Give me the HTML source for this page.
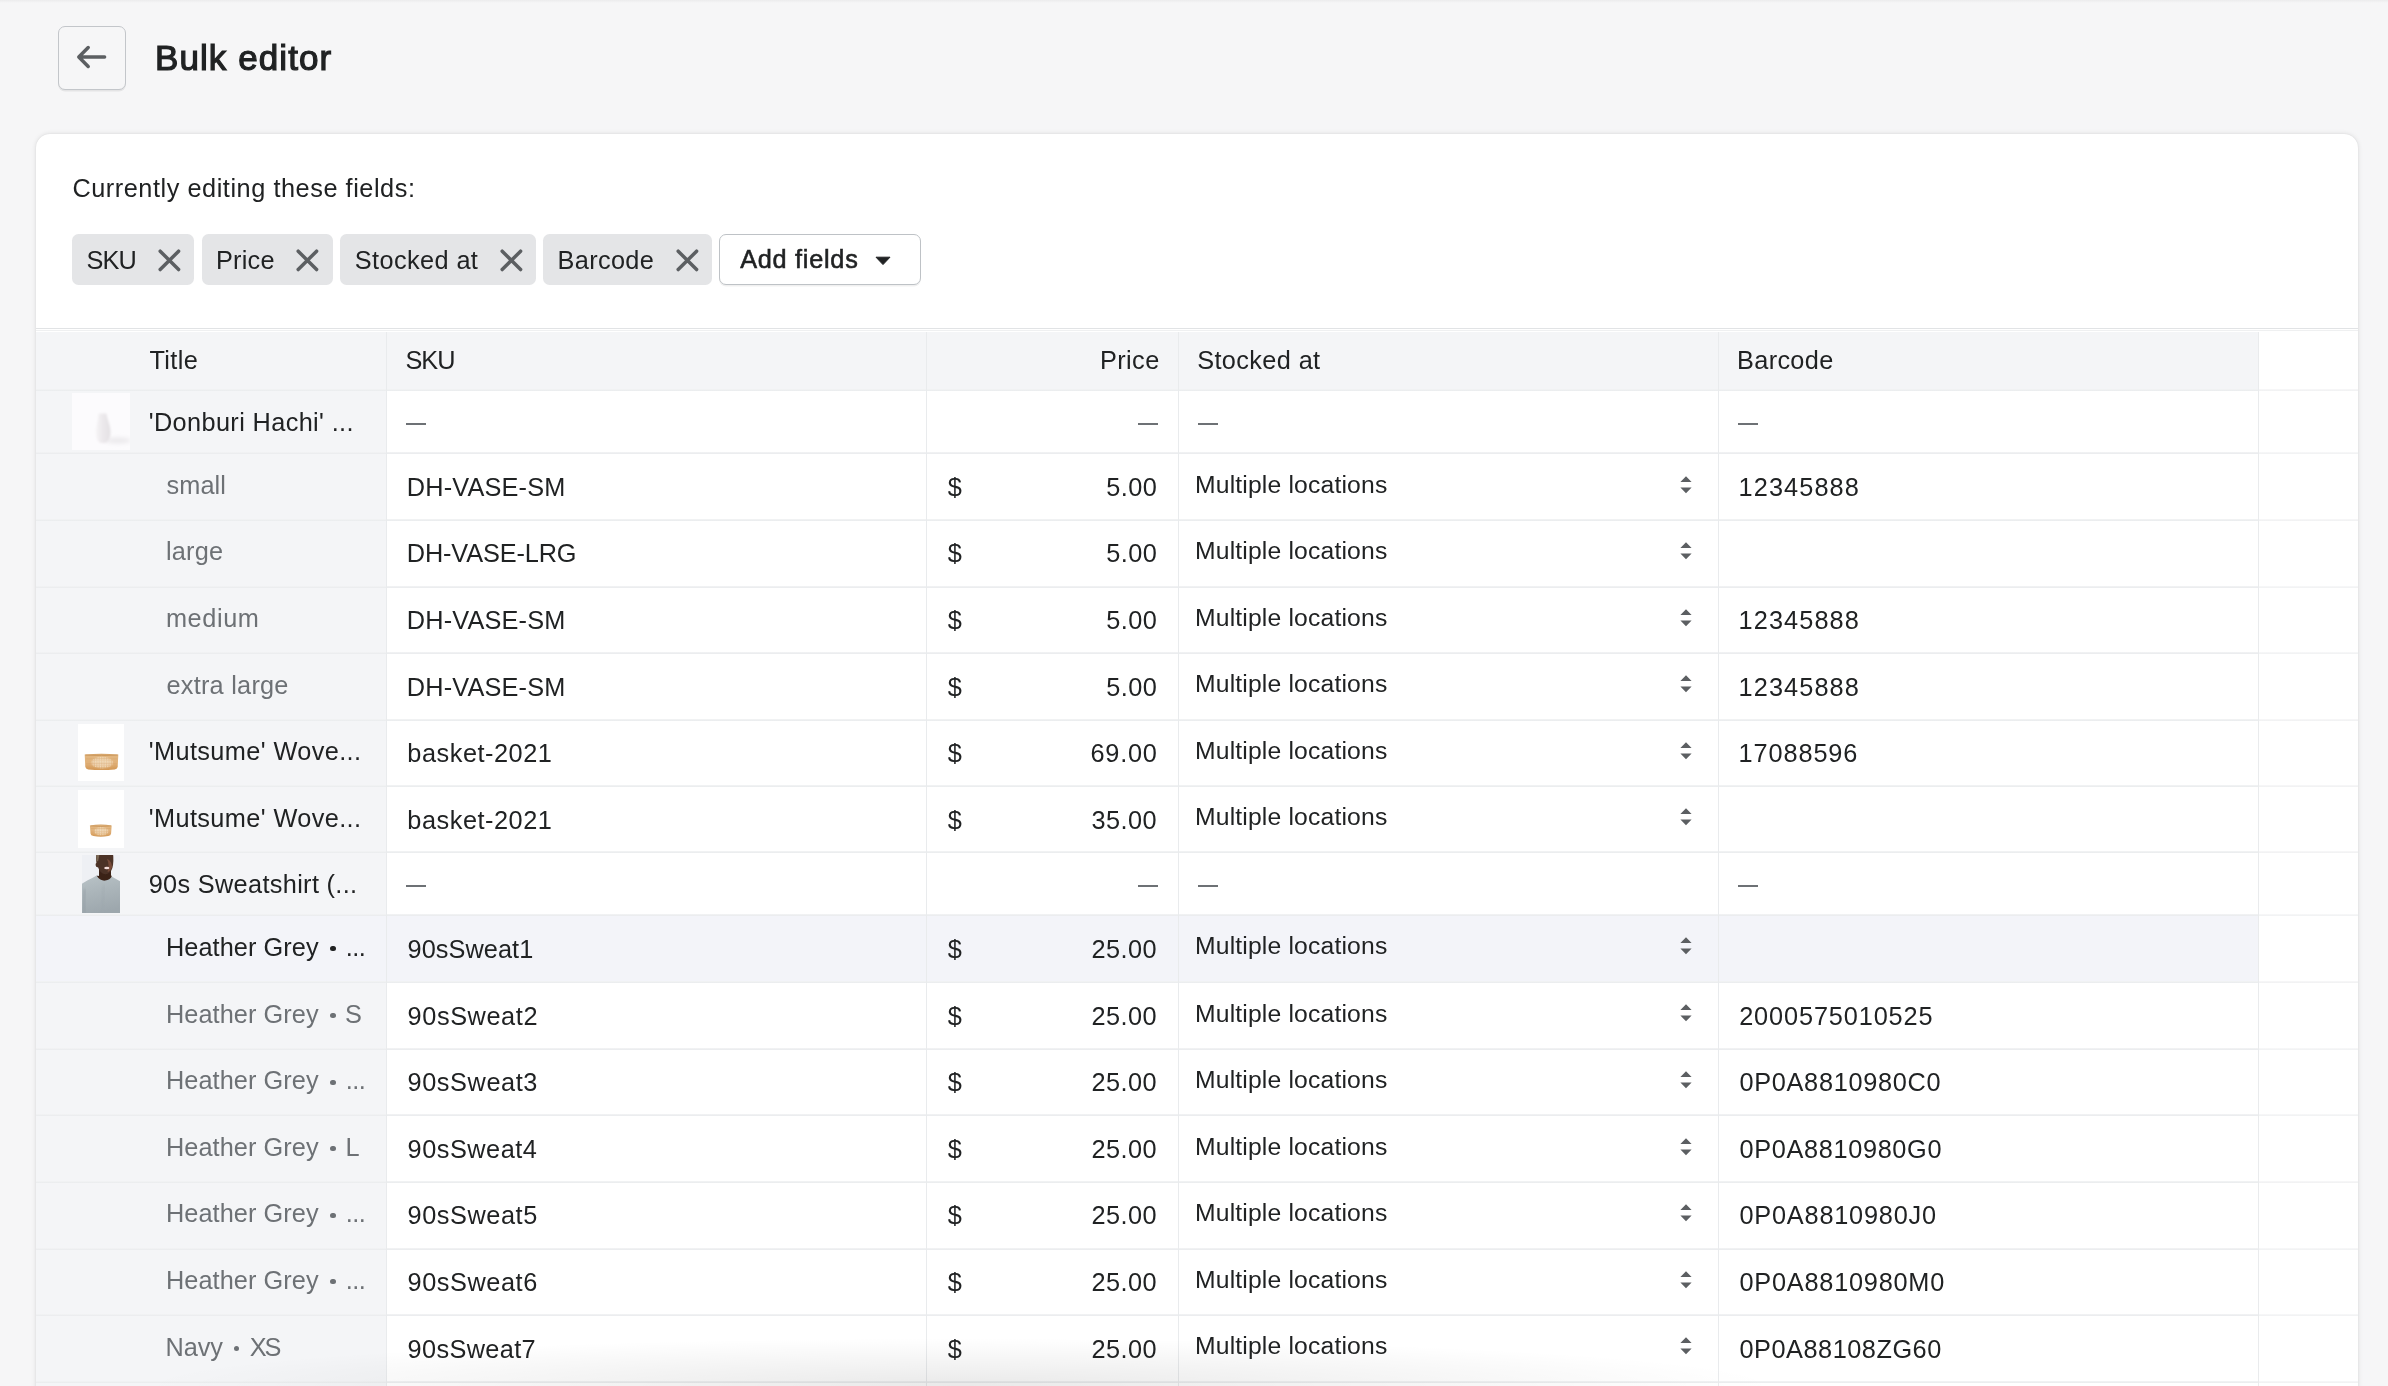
<!DOCTYPE html>
<html><head><meta charset="utf-8"><title>Bulk editor</title>
<style>
*{box-sizing:border-box}
html,body{margin:0;padding:0}
html{width:2388px;height:1386px;overflow:hidden;background:#f6f6f7}
body{width:2388px;height:1386px;overflow:hidden;background:#f6f6f7;font-family:"Liberation Sans", sans-serif;color:#202223}
#root{position:relative;width:2388px;height:1386px;overflow:hidden;background:#f6f6f7}
.t{position:absolute;white-space:pre;line-height:1;font-family:"Liberation Sans", sans-serif;color:#202223}
.txt{position:absolute;left:0;top:0;width:2388px;height:1386px;will-change:transform}
.topshade{position:absolute;left:0;top:0;width:2388px;height:3px;background:linear-gradient(#ececed,#f6f6f7)}
.back{position:absolute;left:58px;top:26px;width:68px;height:64px;border:1px solid #c3c6ca;border-radius:7px;background:#f6f6f7;box-shadow:0 1.5px 0 rgba(0,0,0,.07)}
.back svg{position:absolute;left:-1px;top:-1px}
.card{position:absolute;left:36px;top:134px;width:2322px;height:1300px;background:#fff;border-radius:14px;box-shadow:0 0 5px rgba(0,0,0,.115),0 0 1.5px rgba(0,0,0,.07)}
.tag{position:absolute;top:234px;height:51px;background:#e4e5e7;border-radius:6.5px}
.x,.caret,.sel,.th{position:absolute}
.addbtn{position:absolute;left:719px;top:234px;width:202px;height:51px;border:1px solid #bec2c6;border-radius:7px;background:#fff;box-shadow:0 1.5px 0 rgba(0,0,0,.06)}
.sep1{position:absolute;left:36px;top:328px;width:2322px;height:1px;background:#e1e3e5}
.sep2{position:absolute;left:36px;top:330px;width:2322px;height:1px;background:#eff0f1}
.thead{position:absolute;left:36px;top:332px;width:2222px;height:59px;background:#f4f5f7}
.tcol{position:absolute;left:36px;top:391px;width:350px;height:995px;background:#f4f5f7}
.hrow{position:absolute;left:36px;width:2222px;background:#f3f4f9}
.hl{position:absolute;height:2px;background:linear-gradient(#f3f4f5,#e9ebed)}
.hl2{position:absolute;height:2px;background:linear-gradient(#f8f8f9,#f0f1f2)}
.vl{position:absolute;top:332px;width:1px;height:1054px;background:#e9ebed}
.dash{position:absolute;height:2px;background:#6d7175}
.bul{position:absolute;width:5.2px;height:5.2px;border-radius:50%}
.botshade{position:absolute;left:140px;top:1338px;width:1640px;height:48px;background:radial-gradient(ellipse 50% 100% at 50% 100%,rgba(0,0,0,.085),rgba(0,0,0,0) 100%)}
</style></head>
<body>
<div id="root">
<div class="topshade"></div>
<div class="back"><svg width="68" height="64" viewBox="0 0 68 64"><path d="M46.6 31 H21.4 M30.2 21.6 L20.8 31 L30.2 40.4" fill="none" stroke="#5c5f62" stroke-width="3.5" stroke-linecap="round" stroke-linejoin="round"/></svg></div>
<div class="card">
</div>
<div class="tag" style="left:72px;width:122px"></div><svg class="x" style="left:156.8px;top:247.5px" width="25" height="25" viewBox="0 0 25 25"><path d="M3.2 3.2 L21.6 21.6 M21.6 3.2 L3.2 21.6" stroke="#5c5f62" stroke-width="3.5" stroke-linecap="round" fill="none"/></svg>
<div class="tag" style="left:202px;width:131px"></div><svg class="x" style="left:295.0px;top:247.5px" width="25" height="25" viewBox="0 0 25 25"><path d="M3.2 3.2 L21.6 21.6 M21.6 3.2 L3.2 21.6" stroke="#5c5f62" stroke-width="3.5" stroke-linecap="round" fill="none"/></svg>
<div class="tag" style="left:340px;width:195.70000000000005px"></div><svg class="x" style="left:498.5px;top:247.5px" width="25" height="25" viewBox="0 0 25 25"><path d="M3.2 3.2 L21.6 21.6 M21.6 3.2 L3.2 21.6" stroke="#5c5f62" stroke-width="3.5" stroke-linecap="round" fill="none"/></svg>
<div class="tag" style="left:543px;width:169px"></div><svg class="x" style="left:674.9px;top:247.5px" width="25" height="25" viewBox="0 0 25 25"><path d="M3.2 3.2 L21.6 21.6 M21.6 3.2 L3.2 21.6" stroke="#5c5f62" stroke-width="3.5" stroke-linecap="round" fill="none"/></svg>
<div class="addbtn"></div>
<svg class="caret" style="left:874.7px;top:256px" width="16" height="11" viewBox="0 0 16 11"><path d="M1 1.2 H15 L8 8.6 Z" fill="#202223" stroke="#202223" stroke-width="1" stroke-linejoin="round"/></svg>
<div class="sep1"></div><div class="sep2"></div>
<div class="thead"></div>
<div class="tcol"></div>
<div class="hrow" style="top:916px;height:66px"></div>
<div class="hl" style="left:36px;top:389px;width:2222px"></div>
<div class="hl2" style="left:2258px;top:389px;width:100px"></div>
<div class="hl" style="left:36px;top:452px;width:2222px"></div>
<div class="hl2" style="left:2258px;top:452px;width:100px"></div>
<div class="hl" style="left:36px;top:519px;width:2222px"></div>
<div class="hl2" style="left:2258px;top:519px;width:100px"></div>
<div class="hl" style="left:36px;top:586px;width:2222px"></div>
<div class="hl2" style="left:2258px;top:586px;width:100px"></div>
<div class="hl" style="left:36px;top:652px;width:2222px"></div>
<div class="hl2" style="left:2258px;top:652px;width:100px"></div>
<div class="hl" style="left:36px;top:719px;width:2222px"></div>
<div class="hl2" style="left:2258px;top:719px;width:100px"></div>
<div class="hl" style="left:36px;top:785px;width:2222px"></div>
<div class="hl2" style="left:2258px;top:785px;width:100px"></div>
<div class="hl" style="left:36px;top:851px;width:2222px"></div>
<div class="hl2" style="left:2258px;top:851px;width:100px"></div>
<div class="hl" style="left:36px;top:914px;width:2222px"></div>
<div class="hl2" style="left:2258px;top:914px;width:100px"></div>
<div class="hl" style="left:36px;top:981px;width:2222px"></div>
<div class="hl2" style="left:2258px;top:981px;width:100px"></div>
<div class="hl" style="left:36px;top:1048px;width:2222px"></div>
<div class="hl2" style="left:2258px;top:1048px;width:100px"></div>
<div class="hl" style="left:36px;top:1114px;width:2222px"></div>
<div class="hl2" style="left:2258px;top:1114px;width:100px"></div>
<div class="hl" style="left:36px;top:1181px;width:2222px"></div>
<div class="hl2" style="left:2258px;top:1181px;width:100px"></div>
<div class="hl" style="left:36px;top:1248px;width:2222px"></div>
<div class="hl2" style="left:2258px;top:1248px;width:100px"></div>
<div class="hl" style="left:36px;top:1314px;width:2222px"></div>
<div class="hl2" style="left:2258px;top:1314px;width:100px"></div>
<div class="hl" style="left:36px;top:1381px;width:2222px"></div>
<div class="hl2" style="left:2258px;top:1381px;width:100px"></div>
<div class="vl" style="left:386px"></div>
<div class="vl" style="left:926px"></div>
<div class="vl" style="left:1178px"></div>
<div class="vl" style="left:1718px"></div>
<div class="vl" style="left:2258px"></div>
<div class="dash" style="left:405.8px;top:422.7px;width:20.0px"></div>
<div class="dash" style="left:1138.2px;top:422.7px;width:20.1px"></div>
<div class="dash" style="left:1197.8px;top:422.7px;width:19.9px"></div>
<div class="dash" style="left:1737.7px;top:422.7px;width:20.5px"></div>
<svg class="sel" style="left:1680.3px;top:475.5px" width="12" height="18" viewBox="0 0 12 18"><path d="M6 0.3 L11.6 5.9 H0.4 Z M0.4 11.6 H11.6 L6 17.2 Z" fill="#5c5f62"/></svg>
<svg class="sel" style="left:1680.3px;top:542.1px" width="12" height="18" viewBox="0 0 12 18"><path d="M6 0.3 L11.6 5.9 H0.4 Z M0.4 11.6 H11.6 L6 17.2 Z" fill="#5c5f62"/></svg>
<svg class="sel" style="left:1680.3px;top:608.6px" width="12" height="18" viewBox="0 0 12 18"><path d="M6 0.3 L11.6 5.9 H0.4 Z M0.4 11.6 H11.6 L6 17.2 Z" fill="#5c5f62"/></svg>
<svg class="sel" style="left:1680.3px;top:675.2px" width="12" height="18" viewBox="0 0 12 18"><path d="M6 0.3 L11.6 5.9 H0.4 Z M0.4 11.6 H11.6 L6 17.2 Z" fill="#5c5f62"/></svg>
<svg class="sel" style="left:1680.3px;top:741.6px" width="12" height="18" viewBox="0 0 12 18"><path d="M6 0.3 L11.6 5.9 H0.4 Z M0.4 11.6 H11.6 L6 17.2 Z" fill="#5c5f62"/></svg>
<svg class="sel" style="left:1680.3px;top:808.2px" width="12" height="18" viewBox="0 0 12 18"><path d="M6 0.3 L11.6 5.9 H0.4 Z M0.4 11.6 H11.6 L6 17.2 Z" fill="#5c5f62"/></svg>
<div class="dash" style="left:405.8px;top:884.8px;width:20.0px"></div>
<div class="dash" style="left:1138.2px;top:884.8px;width:20.1px"></div>
<div class="dash" style="left:1197.8px;top:884.8px;width:19.9px"></div>
<div class="dash" style="left:1737.7px;top:884.8px;width:20.5px"></div>
<div class="bul" style="left:330.4px;top:946.0px;background:#202223"></div>
<svg class="sel" style="left:1680.3px;top:937.3px" width="12" height="18" viewBox="0 0 12 18"><path d="M6 0.3 L11.6 5.9 H0.4 Z M0.4 11.6 H11.6 L6 17.2 Z" fill="#5c5f62"/></svg>
<div class="bul" style="left:330.4px;top:1013.1px;background:#6d7175"></div>
<svg class="sel" style="left:1680.3px;top:1004.4px" width="12" height="18" viewBox="0 0 12 18"><path d="M6 0.3 L11.6 5.9 H0.4 Z M0.4 11.6 H11.6 L6 17.2 Z" fill="#5c5f62"/></svg>
<div class="bul" style="left:330.4px;top:1079.7px;background:#6d7175"></div>
<svg class="sel" style="left:1680.3px;top:1071.0px" width="12" height="18" viewBox="0 0 12 18"><path d="M6 0.3 L11.6 5.9 H0.4 Z M0.4 11.6 H11.6 L6 17.2 Z" fill="#5c5f62"/></svg>
<div class="bul" style="left:330.4px;top:1146.2px;background:#6d7175"></div>
<svg class="sel" style="left:1680.3px;top:1137.5px" width="12" height="18" viewBox="0 0 12 18"><path d="M6 0.3 L11.6 5.9 H0.4 Z M0.4 11.6 H11.6 L6 17.2 Z" fill="#5c5f62"/></svg>
<div class="bul" style="left:330.4px;top:1212.7px;background:#6d7175"></div>
<svg class="sel" style="left:1680.3px;top:1204.0px" width="12" height="18" viewBox="0 0 12 18"><path d="M6 0.3 L11.6 5.9 H0.4 Z M0.4 11.6 H11.6 L6 17.2 Z" fill="#5c5f62"/></svg>
<div class="bul" style="left:330.4px;top:1279.2px;background:#6d7175"></div>
<svg class="sel" style="left:1680.3px;top:1270.5px" width="12" height="18" viewBox="0 0 12 18"><path d="M6 0.3 L11.6 5.9 H0.4 Z M0.4 11.6 H11.6 L6 17.2 Z" fill="#5c5f62"/></svg>
<div class="bul" style="left:234.0px;top:1345.9px;background:#6d7175"></div>
<svg class="sel" style="left:1680.3px;top:1337.2px" width="12" height="18" viewBox="0 0 12 18"><path d="M6 0.3 L11.6 5.9 H0.4 Z M0.4 11.6 H11.6 L6 17.2 Z" fill="#5c5f62"/></svg>
<svg class="th" style="left:72px;top:393px" width="58" height="57" viewBox="0 0 58 57"><defs><filter id="b1" x="-30%" y="-30%" width="160%" height="160%"><feGaussianBlur stdDeviation="1.3"/></filter><filter id="b2" x="-30%" y="-80%" width="160%" height="260%"><feGaussianBlur stdDeviation="2.2"/></filter><linearGradient id="vg" x1="0" x2="1"><stop offset="0" stop-color="#f6f4f6"/><stop offset=".45" stop-color="#ece9ec"/><stop offset="1" stop-color="#e3e0e3"/></linearGradient></defs><rect width="58" height="57" fill="#fcfbfd"/><ellipse cx="46" cy="47.5" rx="13" ry="3" fill="#ebe9ec" filter="url(#b2)"/><path d="M26.5 20.5 L34.5 20.5 C35 26 38.5 32 38.5 39 C38.5 45 36 50 32 50 L29.5 50 C26 50 24 45 24 39.5 C24 32 26.5 27 26.5 20.5 Z" fill="url(#vg)" filter="url(#b1)"/><path d="M26.5 21 L34.5 21" stroke="#cfccd0" stroke-width="1.2" filter="url(#b1)"/><path d="M29 50 L34 50" stroke="#d8d2d0" stroke-width="1.2" filter="url(#b1)"/></svg>
<svg class="th" style="left:78px;top:724px" width="46" height="57" viewBox="0 0 46 57"><defs><filter id="bb724" x="-20%" y="-20%" width="140%" height="140%"><feGaussianBlur stdDeviation="0.55"/></filter><filter id="bc724" x="-30%" y="-30%" width="160%" height="160%"><feGaussianBlur stdDeviation="1.6"/></filter><linearGradient id="bg724" x1="0" y1="0" x2="0" y2="1"><stop offset="0" stop-color="#d3a164"/><stop offset=".18" stop-color="#e2b67f"/><stop offset=".6" stop-color="#e0b078"/><stop offset="1" stop-color="#d29652"/></linearGradient></defs><rect width="46" height="57" fill="#fff"/><g filter="url(#bb724)"><path d="M6.7 30.6 Q23.5 28.8 40.3 30.6 L39.7 42.7 Q39.5 45.1 36.8 45.4 Q23.5 46.6 10.2 45.4 Q7.5 45.1 7.3 42.7 Z" fill="url(#bg724)"/></g><ellipse cx="24.0" cy="38.6" rx="10.1" ry="4.9" fill="#f0dcbd" opacity=".55" filter="url(#bc724)"/><pattern id="bp724" width="1.7" height="2.3" patternUnits="userSpaceOnUse"><rect x="0.2" y="0.3" width="0.75" height="1.5" fill="#faeedb"/></pattern><ellipse cx="24.0" cy="38.6" rx="11.1" ry="5.8" fill="url(#bp724)" opacity=".8" filter="url(#bb724)"/><path d="M7.7 34.9 H39.3 M7.7 39.7 H39.3" stroke="#c98f52" stroke-width="0.5" opacity=".45" filter="url(#bb724)"/><path d="M7.5 31.0 Q23.5 32.3 39.5 31.0" stroke="#c48d51" stroke-width="0.9" fill="none" opacity=".7" filter="url(#bb724)"/></svg>
<svg class="th" style="left:78px;top:790px" width="46" height="58" viewBox="0 0 46 58"><defs><filter id="bb790" x="-20%" y="-20%" width="140%" height="140%"><feGaussianBlur stdDeviation="0.55"/></filter><filter id="bc790" x="-30%" y="-30%" width="160%" height="160%"><feGaussianBlur stdDeviation="1.6"/></filter><linearGradient id="bg790" x1="0" y1="0" x2="0" y2="1"><stop offset="0" stop-color="#d3a164"/><stop offset=".18" stop-color="#e2b67f"/><stop offset=".6" stop-color="#e0b078"/><stop offset="1" stop-color="#d29652"/></linearGradient></defs><rect width="46" height="58" fill="#fff"/><g filter="url(#bb790)"><path d="M11.9 35.5 Q22.8 33.7 33.7 35.5 L33.1 43.4 Q32.9 45.8 30.2 46.1 Q22.8 47.3 15.4 46.1 Q12.7 45.8 12.5 43.4 Z" fill="url(#bg790)"/></g><ellipse cx="23.3" cy="41.2" rx="6.5" ry="3.6" fill="#f0dcbd" opacity=".55" filter="url(#bc790)"/><pattern id="bp790" width="1.7" height="2.3" patternUnits="userSpaceOnUse"><rect x="0.2" y="0.3" width="0.75" height="1.5" fill="#faeedb"/></pattern><ellipse cx="23.3" cy="41.2" rx="7.2" ry="4.3" fill="url(#bp790)" opacity=".8" filter="url(#bb790)"/><path d="M12.9 38.4 H32.7 M12.9 42.0 H32.7" stroke="#c98f52" stroke-width="0.5" opacity=".45" filter="url(#bb790)"/><path d="M12.7 35.9 Q22.8 37.2 32.9 35.9" stroke="#c48d51" stroke-width="0.9" fill="none" opacity=".7" filter="url(#bb790)"/></svg>
<svg class="th" style="left:82px;top:855px" width="38" height="58" viewBox="0 0 38 58"><defs><filter id="b3" x="-20%" y="-20%" width="140%" height="140%"><feGaussianBlur stdDeviation="0.75"/></filter><filter id="b4" x="-40%" y="-40%" width="180%" height="180%"><feGaussianBlur stdDeviation="1.6"/></filter><linearGradient id="sw" x1="0" y1="0" x2="0.25" y2="1"><stop offset="0" stop-color="#b9c3c7"/><stop offset=".5" stop-color="#aab4b9"/><stop offset="1" stop-color="#9da7ad"/></linearGradient><clipPath id="cp"><rect width="38" height="58"/></clipPath></defs><rect width="38" height="58" fill="#eef0f4"/><g clip-path="url(#cp)"><g filter="url(#b3)"><path d="M-2 60 L-2 30 C2 27 9 24 14.7 20.6 L29.7 21.4 C33 23.5 37 25.5 40 27 L40 60 Z" fill="url(#sw)"/><path d="M17 14 L17 21 L14.7 20.8 C17 24.5 20.5 26 23.3 25.6 C26.5 25.2 28.5 23.5 29.7 21.5 L29 20 L29 14 Z" fill="#3a2219"/><path d="M14.6 -2 L31 -2 C31.6 3 31.6 9 30.4 13 C29 17 26.5 19.2 23.5 19.2 C20.5 19.2 17.6 16.5 16.2 12.5 L14.2 11.8 C13.4 10 13.4 8.5 14.4 8 C14 5 14 1 14.6 -2 Z" fill="#4c3126"/><path d="M14.4 -1 L17.6 -1 L16.2 6 L14.6 6.5 Z" fill="#7b6a55"/><path d="M25 4 C28 5 30 8 30 12 C29 15 27.5 16.5 25.5 17 C27 13 27 8 25 4 Z" fill="#80503c" opacity=".8"/><ellipse cx="24.8" cy="13" rx="2.6" ry="1.3" fill="#f3dcd8"/></g><path d="M3 34 C2 42 1.5 50 2.5 58" stroke="#8d979f" stroke-width="2.2" fill="none" opacity=".6" filter="url(#b4)"/><path d="M22 30 C21 40 21 50 20 58" stroke="#9da7ad" stroke-width="2" fill="none" opacity=".5" filter="url(#b4)"/></g></svg>
<div class="botshade"></div>
<div class="txt">
<span class="t" style="left:155.06px;top:40px;font-size:35px;letter-spacing:1.073px;-webkit-text-stroke:1.2px #202223;">Bulk editor</span>
<span class="t" style="left:72.39px;top:176px;font-size:25.3px;letter-spacing:0.545px;">Currently editing these fields:</span>
<span class="t" style="left:86.60px;top:248px;font-size:25.3px;letter-spacing:-0.959px;">SKU</span>
<span class="t" style="left:215.91px;top:248px;font-size:25.3px;letter-spacing:0.255px;">Price</span>
<span class="t" style="left:354.72px;top:248px;font-size:25.3px;letter-spacing:0.404px;">Stocked at</span>
<span class="t" style="left:557.61px;top:248px;font-size:25.3px;letter-spacing:0.326px;">Barcode</span>
<span class="t" style="left:740.13px;top:247px;font-size:25.3px;letter-spacing:0.730px;-webkit-text-stroke:0.55px #202223;">Add fields</span>
<span class="t" style="left:149.46px;top:348px;font-size:25.3px;letter-spacing:0.348px;">Title</span>
<span class="t" style="left:405.41px;top:348px;font-size:25.3px;letter-spacing:-0.908px;">SKU</span>
<span class="t" style="left:1099.91px;top:348px;font-size:25.3px;letter-spacing:0.415px;">Price</span>
<span class="t" style="left:1197.13px;top:348px;font-size:25.3px;letter-spacing:0.384px;">Stocked at</span>
<span class="t" style="left:1737.05px;top:348px;font-size:25.3px;letter-spacing:0.325px;">Barcode</span>
<span class="t" style="left:148.74px;top:410px;font-size:25.3px;letter-spacing:0.375px;">'Donburi Hachi' ...</span>
<span class="t" style="left:166.62px;top:473px;font-size:25.3px;letter-spacing:0.073px;color:#6d7175;">small</span>
<span class="t" style="left:406.82px;top:475px;font-size:25.3px;letter-spacing:0.176px;">DH-VASE-SM</span>
<span class="t" style="left:947.82px;top:475px;font-size:25.3px;letter-spacing:-2.600px;">$</span>
<span class="t" style="left:1106.33px;top:475px;font-size:25.3px;letter-spacing:0.419px;">5.00</span>
<span class="t" style="left:1195.00px;top:473px;font-size:24.7px;letter-spacing:0.169px;">Multiple locations</span>
<span class="t" style="left:1738.61px;top:475px;font-size:25.3px;letter-spacing:1.091px;">12345888</span>
<span class="t" style="left:165.95px;top:539px;font-size:25.3px;letter-spacing:0.219px;color:#6d7175;">large</span>
<span class="t" style="left:406.82px;top:541px;font-size:25.3px;letter-spacing:-0.136px;">DH-VASE-LRG</span>
<span class="t" style="left:947.82px;top:541px;font-size:25.3px;letter-spacing:-2.600px;">$</span>
<span class="t" style="left:1106.33px;top:541px;font-size:25.3px;letter-spacing:0.419px;">5.00</span>
<span class="t" style="left:1195.00px;top:539px;font-size:24.7px;letter-spacing:0.169px;">Multiple locations</span>
<span class="t" style="left:165.89px;top:606px;font-size:25.3px;letter-spacing:0.615px;color:#6d7175;">medium</span>
<span class="t" style="left:406.82px;top:608px;font-size:25.3px;letter-spacing:0.176px;">DH-VASE-SM</span>
<span class="t" style="left:947.82px;top:608px;font-size:25.3px;letter-spacing:-2.600px;">$</span>
<span class="t" style="left:1106.33px;top:608px;font-size:25.3px;letter-spacing:0.419px;">5.00</span>
<span class="t" style="left:1195.00px;top:606px;font-size:24.7px;letter-spacing:0.169px;">Multiple locations</span>
<span class="t" style="left:1738.61px;top:608px;font-size:25.3px;letter-spacing:1.091px;">12345888</span>
<span class="t" style="left:166.46px;top:673px;font-size:25.3px;letter-spacing:0.247px;color:#6d7175;">extra large</span>
<span class="t" style="left:406.82px;top:675px;font-size:25.3px;letter-spacing:0.176px;">DH-VASE-SM</span>
<span class="t" style="left:947.82px;top:675px;font-size:25.3px;letter-spacing:-2.600px;">$</span>
<span class="t" style="left:1106.33px;top:675px;font-size:25.3px;letter-spacing:0.419px;">5.00</span>
<span class="t" style="left:1195.00px;top:672px;font-size:24.7px;letter-spacing:0.169px;">Multiple locations</span>
<span class="t" style="left:1738.61px;top:675px;font-size:25.3px;letter-spacing:1.091px;">12345888</span>
<span class="t" style="left:148.74px;top:739px;font-size:25.3px;letter-spacing:0.394px;">'Mutsume' Wove...</span>
<span class="t" style="left:407.32px;top:741px;font-size:25.3px;letter-spacing:0.535px;">basket-2021</span>
<span class="t" style="left:947.82px;top:741px;font-size:25.3px;letter-spacing:-2.600px;">$</span>
<span class="t" style="left:1090.45px;top:741px;font-size:25.3px;letter-spacing:0.785px;">69.00</span>
<span class="t" style="left:1195.00px;top:739px;font-size:24.7px;letter-spacing:0.169px;">Multiple locations</span>
<span class="t" style="left:1738.61px;top:741px;font-size:25.3px;letter-spacing:0.885px;">17088596</span>
<span class="t" style="left:148.74px;top:806px;font-size:25.3px;letter-spacing:0.394px;">'Mutsume' Wove...</span>
<span class="t" style="left:407.32px;top:808px;font-size:25.3px;letter-spacing:0.535px;">basket-2021</span>
<span class="t" style="left:947.82px;top:808px;font-size:25.3px;letter-spacing:-2.600px;">$</span>
<span class="t" style="left:1091.54px;top:808px;font-size:25.3px;letter-spacing:0.441px;">35.00</span>
<span class="t" style="left:1195.00px;top:805px;font-size:24.7px;letter-spacing:0.169px;">Multiple locations</span>
<span class="t" style="left:148.65px;top:872px;font-size:25.3px;letter-spacing:0.335px;">90s Sweatshirt (...</span>
<span class="t" style="left:165.95px;top:935px;font-size:25.3px;letter-spacing:0.079px;">Heather Grey</span>
<span class="t" style="left:345.73px;top:935px;font-size:25.3px;letter-spacing:-0.558px;">...</span>
<span class="t" style="left:407.58px;top:937px;font-size:25.3px;letter-spacing:0.057px;">90sSweat1</span>
<span class="t" style="left:947.82px;top:937px;font-size:25.3px;letter-spacing:-2.600px;">$</span>
<span class="t" style="left:1091.62px;top:937px;font-size:25.3px;letter-spacing:0.422px;">25.00</span>
<span class="t" style="left:1195.00px;top:934px;font-size:24.7px;letter-spacing:0.169px;">Multiple locations</span>
<span class="t" style="left:165.95px;top:1002px;font-size:25.3px;letter-spacing:0.079px;color:#6d7175;">Heather Grey</span>
<span class="t" style="left:344.88px;top:1002px;font-size:25.3px;letter-spacing:-2.600px;color:#6d7175;">S</span>
<span class="t" style="left:407.58px;top:1004px;font-size:25.3px;letter-spacing:0.591px;">90sSweat2</span>
<span class="t" style="left:947.82px;top:1004px;font-size:25.3px;letter-spacing:-2.600px;">$</span>
<span class="t" style="left:1091.62px;top:1004px;font-size:25.3px;letter-spacing:0.422px;">25.00</span>
<span class="t" style="left:1195.00px;top:1002px;font-size:24.7px;letter-spacing:0.169px;">Multiple locations</span>
<span class="t" style="left:1739.18px;top:1004px;font-size:25.3px;letter-spacing:0.872px;">2000575010525</span>
<span class="t" style="left:165.95px;top:1068px;font-size:25.3px;letter-spacing:0.079px;color:#6d7175;">Heather Grey</span>
<span class="t" style="left:345.73px;top:1068px;font-size:25.3px;letter-spacing:-0.558px;color:#6d7175;">...</span>
<span class="t" style="left:407.58px;top:1070px;font-size:25.3px;letter-spacing:0.578px;">90sSweat3</span>
<span class="t" style="left:947.82px;top:1070px;font-size:25.3px;letter-spacing:-2.600px;">$</span>
<span class="t" style="left:1091.62px;top:1070px;font-size:25.3px;letter-spacing:0.422px;">25.00</span>
<span class="t" style="left:1195.00px;top:1068px;font-size:24.7px;letter-spacing:0.169px;">Multiple locations</span>
<span class="t" style="left:1739.44px;top:1070px;font-size:25.3px;letter-spacing:0.699px;">0P0A8810980C0</span>
<span class="t" style="left:165.95px;top:1135px;font-size:25.3px;letter-spacing:0.079px;color:#6d7175;">Heather Grey</span>
<span class="t" style="left:345.46px;top:1135px;font-size:25.3px;letter-spacing:-1.200px;color:#6d7175;">L</span>
<span class="t" style="left:407.58px;top:1137px;font-size:25.3px;letter-spacing:0.523px;">90sSweat4</span>
<span class="t" style="left:947.82px;top:1137px;font-size:25.3px;letter-spacing:-2.600px;">$</span>
<span class="t" style="left:1091.62px;top:1137px;font-size:25.3px;letter-spacing:0.422px;">25.00</span>
<span class="t" style="left:1195.00px;top:1135px;font-size:24.7px;letter-spacing:0.169px;">Multiple locations</span>
<span class="t" style="left:1739.44px;top:1137px;font-size:25.3px;letter-spacing:0.664px;">0P0A8810980G0</span>
<span class="t" style="left:165.95px;top:1201px;font-size:25.3px;letter-spacing:0.079px;color:#6d7175;">Heather Grey</span>
<span class="t" style="left:345.73px;top:1201px;font-size:25.3px;letter-spacing:-0.558px;color:#6d7175;">...</span>
<span class="t" style="left:407.58px;top:1203px;font-size:25.3px;letter-spacing:0.564px;">90sSweat5</span>
<span class="t" style="left:947.82px;top:1203px;font-size:25.3px;letter-spacing:-2.600px;">$</span>
<span class="t" style="left:1091.62px;top:1203px;font-size:25.3px;letter-spacing:0.422px;">25.00</span>
<span class="t" style="left:1195.00px;top:1201px;font-size:24.7px;letter-spacing:0.169px;">Multiple locations</span>
<span class="t" style="left:1739.44px;top:1203px;font-size:25.3px;letter-spacing:0.798px;">0P0A8810980J0</span>
<span class="t" style="left:165.95px;top:1268px;font-size:25.3px;letter-spacing:0.079px;color:#6d7175;">Heather Grey</span>
<span class="t" style="left:345.73px;top:1268px;font-size:25.3px;letter-spacing:-0.558px;color:#6d7175;">...</span>
<span class="t" style="left:407.58px;top:1270px;font-size:25.3px;letter-spacing:0.565px;">90sSweat6</span>
<span class="t" style="left:947.82px;top:1270px;font-size:25.3px;letter-spacing:-2.600px;">$</span>
<span class="t" style="left:1091.62px;top:1270px;font-size:25.3px;letter-spacing:0.422px;">25.00</span>
<span class="t" style="left:1195.00px;top:1268px;font-size:24.7px;letter-spacing:0.169px;">Multiple locations</span>
<span class="t" style="left:1739.44px;top:1270px;font-size:25.3px;letter-spacing:0.778px;">0P0A8810980M0</span>
<span class="t" style="left:165.61px;top:1335px;font-size:25.3px;letter-spacing:-0.095px;color:#6d7175;">Navy</span>
<span class="t" style="left:249.68px;top:1335px;font-size:25.3px;letter-spacing:-2.070px;color:#6d7175;">XS</span>
<span class="t" style="left:407.58px;top:1337px;font-size:25.3px;letter-spacing:0.369px;">90sSweat7</span>
<span class="t" style="left:947.82px;top:1337px;font-size:25.3px;letter-spacing:-2.600px;">$</span>
<span class="t" style="left:1091.62px;top:1337px;font-size:25.3px;letter-spacing:0.422px;">25.00</span>
<span class="t" style="left:1195.00px;top:1334px;font-size:24.7px;letter-spacing:0.169px;">Multiple locations</span>
<span class="t" style="left:1739.44px;top:1337px;font-size:25.3px;letter-spacing:0.528px;">0P0A88108ZG60</span>
</div>
</div>
</body></html>
